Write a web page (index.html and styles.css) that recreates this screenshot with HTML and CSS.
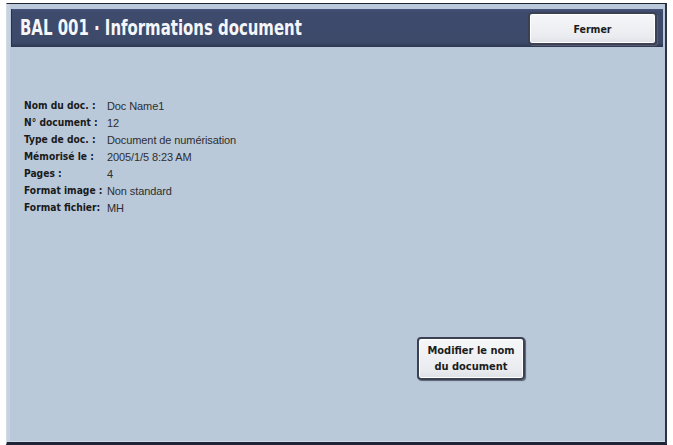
FILE: index.html
```html
<!DOCTYPE html>
<html lang="fr">
<head>
<meta charset="utf-8">
<title>BAL 001 · Informations document</title>
<link rel="stylesheet" href="styles.css">
</head>
<body>
<div class="screen">
  <header class="titlebar">
    <h1 class="title">BAL 001 · Informations document</h1>
    <button class="btn btn-close">Fermer</button>
  </header>
  <main class="content">
    <dl class="info">
      <div class="row"><dt>Nom du doc. :</dt><dd>Doc Name1</dd></div>
      <div class="row"><dt>N° document :</dt><dd>12</dd></div>
      <div class="row"><dt>Type de doc. :</dt><dd>Document de numérisation</dd></div>
      <div class="row"><dt>Mémorisé le :</dt><dd>2005/1/5 8:23 AM</dd></div>
      <div class="row"><dt>Pages :</dt><dd>4</dd></div>
      <div class="row"><dt>Format image :</dt><dd>Non standard</dd></div>
      <div class="row"><dt>Format fichier:</dt><dd>MH</dd></div>
    </dl>
    <div class="actions">
      <button class="btn btn-rename">Modifier le nom<br>du document</button>
    </div>
  </main>
</div>
</body>
</html>
```
FILE: styles.css
```css
html, body {
  margin: 0;
  padding: 0;
  background: #ffffff;
}
body {
  font-family: "Liberation Sans", Arial, sans-serif;
  width: 673px;
  height: 445px;
  overflow: hidden;
}
.screen {
  box-sizing: border-box;
  margin: 3px 0 0 6px;
  width: 661px;
  height: 442px;
  background: #b9c9da;
  border-top: 1px solid #1e2332;
  border-right: 2px solid #2c3344;
  border-bottom: 3px solid #1f2537;
  border-left: 1px solid #d3dbe4;
  box-shadow: inset 3px 0 0 #c6d2df, inset 0 -1px 0 #d0dbe6;
  padding: 5px 2px 0 4px;
  display: flex;
  flex-direction: column;
}
.titlebar {
  height: 38px;
  box-sizing: border-box;
  background: linear-gradient(#46527a 0, #3f4b6c 3px, #3d4969 34px, #2c3550 38px);
  display: flex;
  align-items: center;
  justify-content: space-between;
  padding: 0 6px 0 9px;
  box-shadow: inset 1px 0 0 #2a3046;
}
.title {
  margin: 0;
  color: #f4f6fa;
  font-family: "DejaVu Sans Condensed", "DejaVu Sans", sans-serif;
  font-weight: bold;
  font-size: 21px;
  white-space: nowrap;
  transform: scaleX(0.79);
  transform-origin: left center;
}
.btn {
  font-family: "DejaVu Sans Condensed", "DejaVu Sans", sans-serif;
  font-weight: bold;
  font-size: 10.5px;
  color: #1c1c1c;
  background: linear-gradient(#f6f7f9, #e9ebef 80%, #dcdfe5);
  border: 2px solid #3b4152;
  border-radius: 4px;
  box-shadow: inset 0 0 0 1px #ffffff, 1px 1px 1px #5a6070;
  cursor: pointer;
  padding: 0;
}
.btn-close {
  width: 129px;
  height: 33px;
  margin-top: 1px;
}
.content {
  flex: 1;
  display: flex;
  flex-direction: column;
  padding: 50px 0 0 13px;
}
.info {
  margin: 0;
  display: flex;
  flex-direction: column;
}
.row {
  display: flex;
  height: 17px;
  align-items: center;
}
.row dt {
  width: 83px;
  font-family: "DejaVu Sans Condensed", "DejaVu Sans", sans-serif;
  font-weight: bold;
  color: #1a1a1a;
  white-space: nowrap;
  font-size: 10.2px;
}
.row dd {
  margin: 0;
  color: #2e2e2e;
  font-family: "Liberation Sans", Arial, sans-serif;
  font-size: 11px;
  letter-spacing: -0.1px;
}
.actions {
  display: flex;
  justify-content: flex-start;
  padding: 121px 0 0 393px;
}
.btn-rename {
  width: 108px;
  height: 43px;
  line-height: 16px;
  font-size: 11px;
}
```
